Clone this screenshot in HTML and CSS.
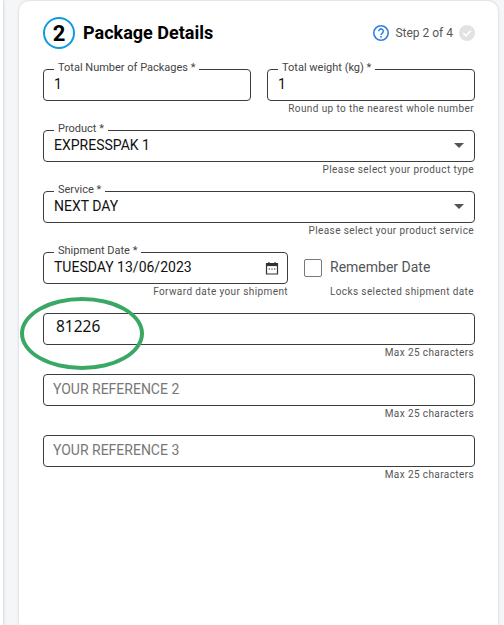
FILE: index.html
```html
<!DOCTYPE html>
<html lang="en">
<head>
    <meta charset="UTF-8">
    <title>Package Details</title>
    <link rel="stylesheet" href="styles.css">
</head>
<body>
    <div class="prev-card"></div>
    <main class="card">
        <header class="card-head">
            <span class="step-no">2</span>
            <h2 class="card-title">Package Details</h2>
            <div class="step-info">
                <svg class="help-icon" viewBox="0 0 16 16" width="16" height="16">
                    <circle cx="8" cy="8" r="7.2" fill="none" stroke="#2f80e0" stroke-width="1.6"/>
                    <path d="M5.7 6.3a2.3 2.3 0 1 1 3.6 1.8c-.9.6-1.3 1-1.3 1.9" fill="none" stroke="#2f80e0" stroke-width="1.5"/>
                    <rect x="7.2" y="11" width="1.6" height="1.6" fill="#2f80e0"/>
                </svg>
                <span class="step-text">Step 2 of 4</span>
                <svg class="done-icon" viewBox="0 0 16 16" width="16" height="16">
                    <circle cx="8" cy="8" r="8" fill="#e2e2e2"/>
                    <path d="M4.2 8.2l2.7 2.7 5-5.2" fill="none" stroke="#fff" stroke-width="1.6"/>
                </svg>
            </div>
        </header>

        <div class="row">
            <div class="col">
                <div class="field">
                    <span class="field-label">Total Number of Packages *</span>
                    <span class="field-value">1</span>
                </div>
                <p class="hint">&nbsp;</p>
            </div>
            <div class="col">
                <div class="field">
                    <span class="field-label">Total weight (kg) *</span>
                    <span class="field-value">1</span>
                </div>
                <p class="hint">Round up to the nearest whole number</p>
            </div>
        </div>

        <div class="row">
            <div class="col">
                <div class="field">
                    <span class="field-label">Product *</span>
                    <span class="field-value">EXPRESSPAK 1</span>
                    <span class="caret"></span>
                </div>
                <p class="hint">Please select your product type</p>
            </div>
        </div>

        <div class="row">
            <div class="col">
                <div class="field">
                    <span class="field-label">Service *</span>
                    <span class="field-value">NEXT DAY</span>
                    <span class="caret"></span>
                </div>
                <p class="hint">Please select your product service</p>
            </div>
        </div>

        <div class="row">
            <div class="col date-col">
                <div class="field">
                    <span class="field-label">Shipment Date *</span>
                    <span class="field-value">TUESDAY 13/06/2023</span>
                    <svg class="cal-icon" viewBox="0 0 14 14" width="14" height="14">
                        <path d="M1.5 2.5h11v10.5h-11z" fill="none" stroke="#333" stroke-width="1.2"/>
                        <path d="M1.5 2.5h11v2.6h-11z" fill="#333"/>
                        <path d="M4 1v2M10 1v2" stroke="#333" stroke-width="1.2"/>
                        <path d="M3.6 8h1.4M6.3 8h1.4M9 8h1.4" stroke="#333" stroke-width="1.2"/>
                    </svg>
                </div>
                <p class="hint">Forward date your shipment</p>
            </div>
            <div class="col remember-col">
                <div class="remember">
                    <span class="checkbox"></span>
                    <span class="remember-text">Remember Date</span>
                </div>
                <p class="hint">Locks selected shipment date</p>
            </div>
        </div>

        <div class="row">
            <div class="col">
                <div class="field">
                    <span class="field-value ref-value">81226</span>
                </div>
                <p class="hint">Max 25 characters</p>
            </div>
        </div>

        <div class="row">
            <div class="col">
                <div class="field">
                    <span class="field-value placeholder">YOUR REFERENCE 2</span>
                </div>
                <p class="hint">Max 25 characters</p>
            </div>
        </div>

        <div class="row">
            <div class="col">
                <div class="field">
                    <span class="field-value placeholder">YOUR REFERENCE 3</span>
                </div>
                <p class="hint">Max 25 characters</p>
            </div>
        </div>

        <div class="highlight"></div>
    </main>
</body>
</html>
```

FILE: styles.css
```css
html, body {
    height: 100%;
}
body {
    margin: 0;
    height: 625px;
    overflow: hidden;
    display: flex;
    background: #f5f6f8;
    font-family: Roboto, "Liberation Sans", sans-serif;
    color: #111;
}
.prev-card {
    width: 3px;
    flex-shrink: 0;
    background: #fff;
    box-shadow: 0 0 3px rgba(0, 0, 0, 0.25);
}
.card {
    position: relative;
    width: 479px;
    margin: 1px 0 0 16px;
    padding: 16px 23px 0 24px;
    box-sizing: border-box;
    background: #fff;
    border-radius: 10px 10px 0 0;
    box-shadow: 0 0 3px rgba(0, 0, 0, 0.18);
}
.card-head {
    display: flex;
    align-items: center;
    height: 32px;
    margin-bottom: 20px;
}
.step-no {
    width: 32px;
    height: 32px;
    box-sizing: border-box;
    border: 2px solid #0f9ae0;
    border-radius: 50%;
    display: flex;
    align-items: center;
    justify-content: center;
    font-size: 22px;
    font-weight: 700;
    color: #000;
}
.card-title {
    margin: 0 0 2px 8px;
    font-size: 18px;
    font-weight: 700;
    color: #000;
}
.step-info {
    margin-left: auto;
    display: flex;
    align-items: center;
}
.step-text {
    margin: 0 6px;
    font-size: 12px;
    color: #555;
}
.row {
    display: flex;
    gap: 16px;
    height: 61px;
}
.col {
    flex: 1;
    min-width: 0;
}
.date-col {
    flex: 0 0 245px;
}
.date-col .hint {
    padding-right: 0;
}
.field {
    position: relative;
    height: 32px;
    box-sizing: border-box;
    border: 1px solid #3d3d3d;
    border-radius: 4px;
    display: flex;
    align-items: center;
    padding: 0 10px;
}
.field-label {
    position: absolute;
    top: -9px;
    left: 10px;
    padding: 0 4px;
    background: #fff;
    font-size: 11px;
    line-height: 13px;
    color: #444;
    white-space: nowrap;
}
.field-value {
    font-size: 14px;
    color: #111;
    margin-top: -2px;
}
.ref-value {
    font-family: "Noto Sans", sans-serif;
    font-size: 15.5px;
    padding-left: 2px;
    margin-top: -6px;
}
.placeholder {
    color: #777;
    margin-left: -1px;
    margin-top: -3px;
}
.hint {
    margin: 0;
    padding: 1px 1px 0 0;
    font-size: 10px;
    line-height: 13px;
    letter-spacing: 0.4px;
    text-align: right;
    color: #555;
    white-space: nowrap;
}
.caret {
    position: absolute;
    right: 10px;
    top: 12px;
    width: 0;
    height: 0;
    border-left: 5px solid transparent;
    border-right: 5px solid transparent;
    border-top: 5px solid #555;
}
.cal-icon {
    position: absolute;
    right: 8px;
    top: 8px;
}
.remember {
    height: 32px;
    display: flex;
    align-items: center;
}
.checkbox {
    width: 16px;
    height: 16px;
    border: 1px solid #777;
    border-radius: 2px;
}
.remember-text {
    margin-left: 8px;
    margin-top: -2px;
    font-size: 14px;
    color: #555;
}
.highlight {
    position: absolute;
    left: 1px;
    top: 296px;
    width: 124px;
    height: 73px;
    box-sizing: border-box;
    border: 4px solid #3aa865;
    border-radius: 50%;
}
```
